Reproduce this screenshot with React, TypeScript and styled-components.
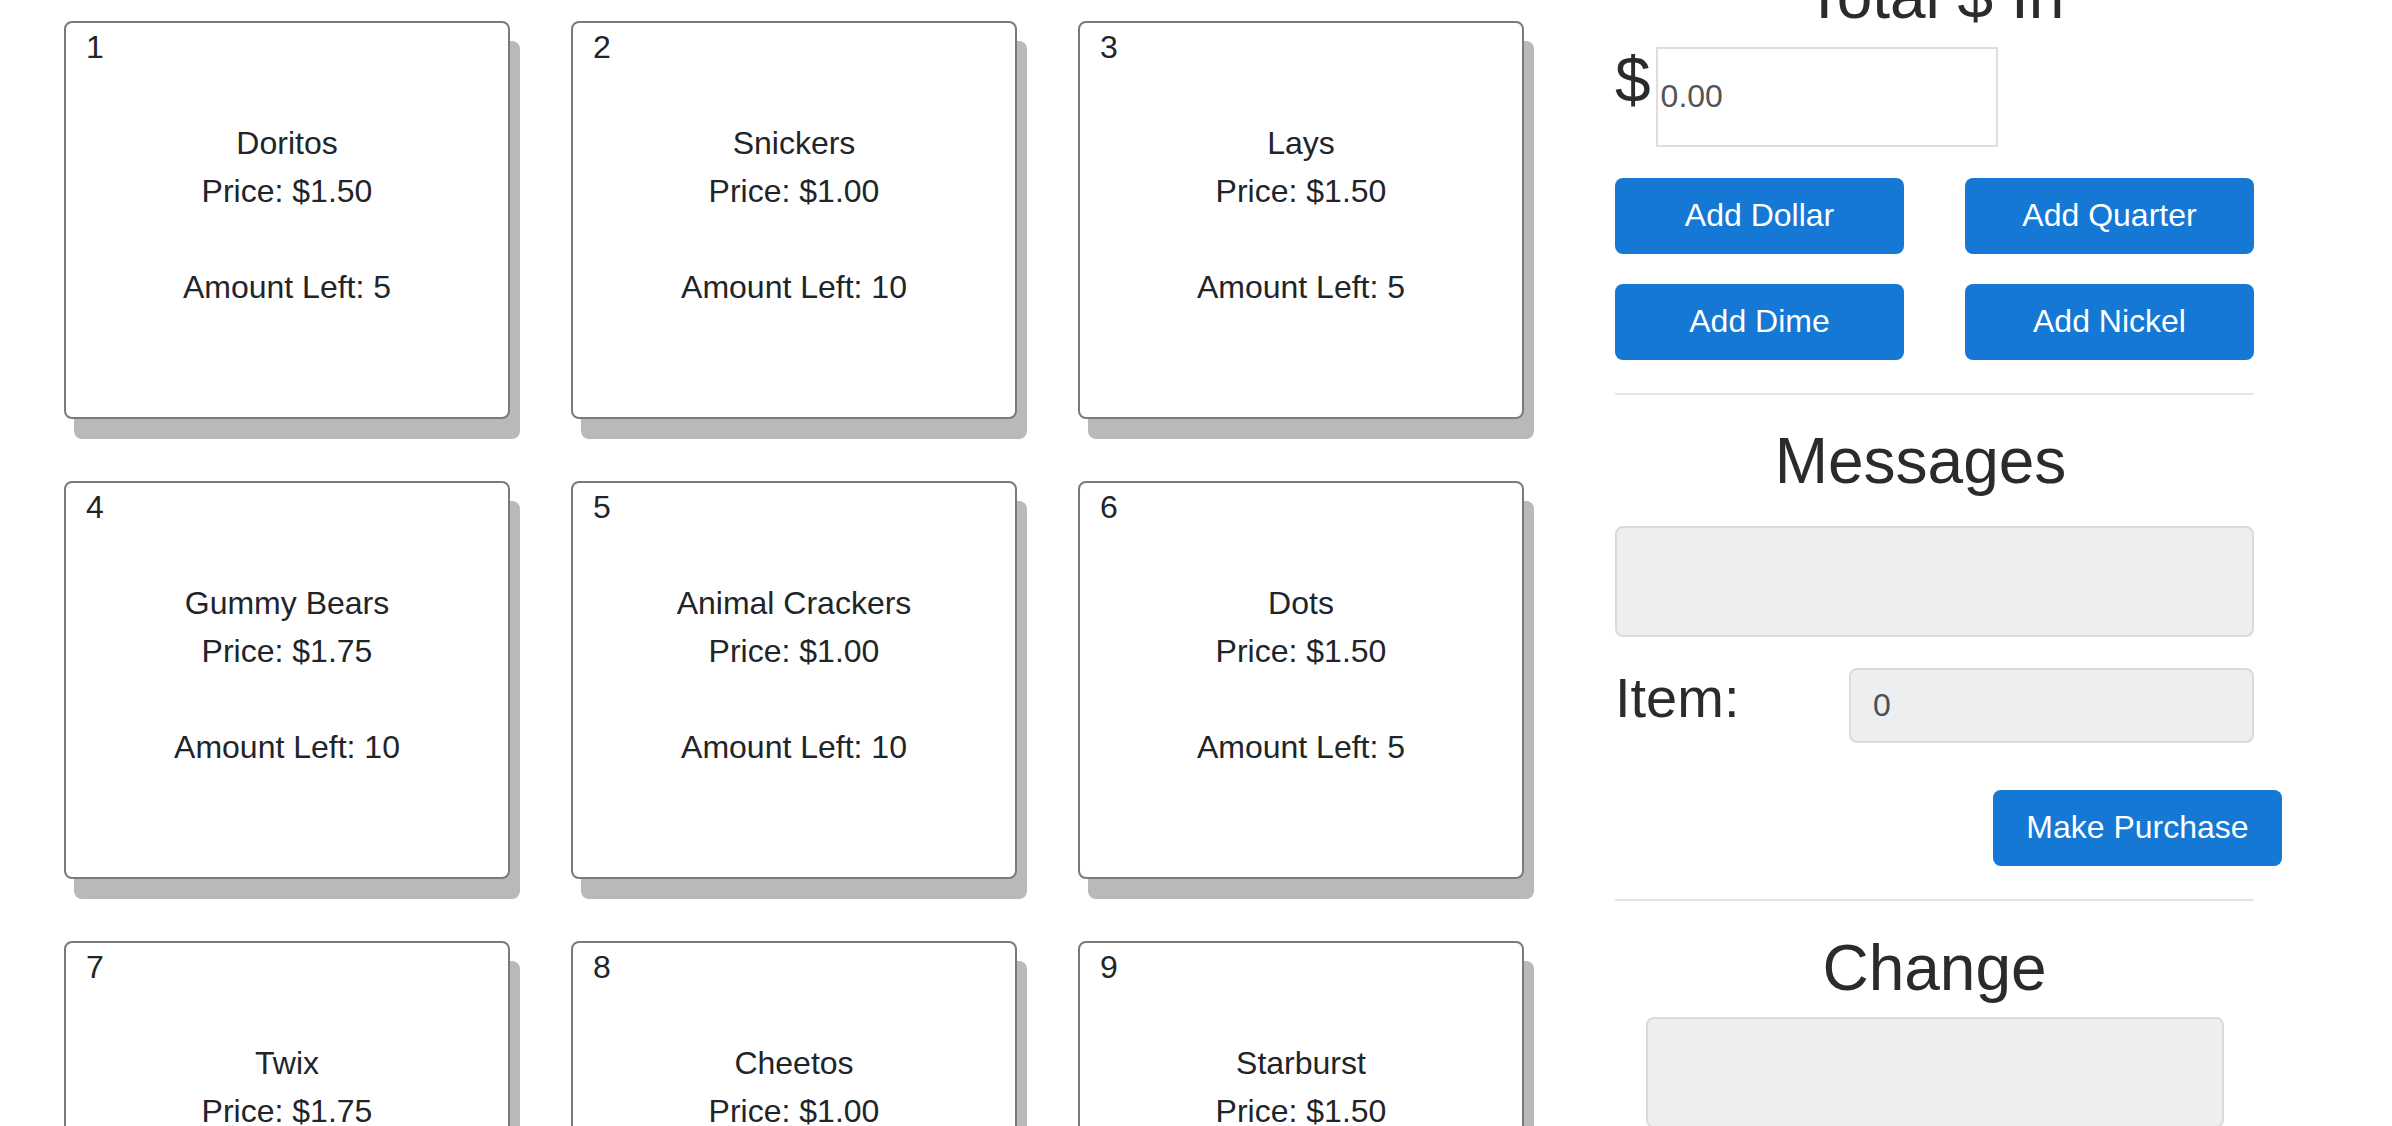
import React from "react";
import styled, { createGlobalStyle } from "styled-components";

const GlobalStyle = createGlobalStyle`
  html, body {
    margin: 0;
    padding: 0;
    background: #ffffff;
    font-family: "Liberation Sans", Arial, sans-serif;
    color: #212529;
    overflow: hidden;
  }
  * { box-sizing: border-box; }
`;

const Page = styled.div`
  display: flex;
  align-items: flex-start;
  padding: 21px 0 0 64px;
  gap: 91px;
  width: 2392px;
  height: 1126px;
`;

const Grid = styled.div`
  display: grid;
  grid-template-columns: repeat(3, 446px);
  column-gap: 61px;
  row-gap: 62px;
`;

const Card = styled.div`
  height: 398px;
  border: 2px solid #7a7a7a;
  border-radius: 8px;
  background: #ffffff;
  box-shadow: 10px 20px 0 #b9b9b9;
  padding: 0 20px;
  font-size: 32px;
  line-height: 48px;
  color: #212529;
`;

const SlotNumber = styled.div`
  text-align: left;
`;

const Line = styled.div<{ $gap?: boolean }>`
  text-align: center;
  margin-top: ${(p) => (p.$gap ? "48px" : "0")};
`;

const Side = styled.div`
  width: 639px;
  margin-top: -63px;
  display: flex;
  flex-direction: column;
  color: #292b2c;
`;

const Heading = styled.h2<{ $top?: number; $bottom?: number; $shift?: number }>`
  margin: ${(p) => p.$top ?? 0}px 0 ${(p) => p.$bottom ?? 0}px 0;
  padding-right: ${(p) => p.$shift ?? 0}px;
  font-size: 64px;
  line-height: 76.8px;
  font-weight: 400;
  text-align: center;
  color: #292b2c;
`;

const MoneyRow = styled.div`
  display: flex;
  align-items: flex-start;
  gap: 5px;
  margin-top: 12px;
`;

const Dollar = styled.span`
  font-size: 64px;
  line-height: 64px;
  margin-top: 1px;
`;

const MoneyInput = styled.input`
  width: 342px;
  height: 100px;
  border: 2px solid #dedede;
  border-radius: 0;
  padding: 0 3px;
  font-family: "Liberation Sans", Arial, sans-serif;
  font-size: 32px;
  color: #555555;
  background: #ffffff;
  outline: none;
`;

const CoinGrid = styled.div`
  display: grid;
  grid-template-columns: repeat(2, 289px);
  column-gap: 61px;
  row-gap: 30px;
  margin-top: 31px;
`;

const Button = styled.button`
  width: 289px;
  height: 76px;
  border: none;
  border-radius: 8px;
  background: #1478d4;
  color: #ffffff;
  font-family: "Liberation Sans", Arial, sans-serif;
  font-size: 32px;
  padding: 0;
  cursor: pointer;
`;

const Rule = styled.hr<{ $top: number }>`
  width: 100%;
  height: 2px;
  border: none;
  background: #e5e5e5;
  margin: ${(p) => p.$top}px 0 0 0;
`;

const ReadBox = styled.div<{ $width?: number }>`
  width: ${(p) => (p.$width ? `${p.$width}px` : "100%")};
  height: 111px;
  align-self: center;
  background: #eceef0;
  border: 2px solid #dadada;
  border-radius: 8px;
`;

const ItemRow = styled.div`
  display: grid;
  grid-template-columns: 234px 1fr;
  align-items: start;
  margin-top: 27px;
`;

const ItemLabel = styled.label`
  font-size: 56px;
  line-height: 67.2px;
  color: #292b2c;
`;

const ItemInput = styled.input`
  height: 75px;
  margin-top: 4px;
  width: 100%;
  background: #eceef0;
  border: 2px solid #dadada;
  border-radius: 8px;
  padding: 0 22px;
  font-family: "Liberation Sans", Arial, sans-serif;
  font-size: 32px;
  color: #495057;
  outline: none;
`;

const PurchaseRow = styled.div`
  display: flex;
  justify-content: flex-end;
  margin-top: 47px;
  margin-right: -28px;
`;

type Item = { id: number; name: string; price: string; qty: number };

const items: Item[] = [
  { id: 1, name: "Doritos", price: "$1.50", qty: 5 },
  { id: 2, name: "Snickers", price: "$1.00", qty: 10 },
  { id: 3, name: "Lays", price: "$1.50", qty: 5 },
  { id: 4, name: "Gummy Bears", price: "$1.75", qty: 10 },
  { id: 5, name: "Animal Crackers", price: "$1.00", qty: 10 },
  { id: 6, name: "Dots", price: "$1.50", qty: 5 },
  { id: 7, name: "Twix", price: "$1.75", qty: 10 },
  { id: 8, name: "Cheetos", price: "$1.00", qty: 10 },
  { id: 9, name: "Starburst", price: "$1.50", qty: 5 },
];

export default function App() {
  return (
    <>
      <GlobalStyle />
      <Page>
        <Grid>
          {items.map((it) => (
            <Card key={it.id}>
              <SlotNumber>{it.id}</SlotNumber>
              <Line $gap>{it.name}</Line>
              <Line>Price: {it.price}</Line>
              <Line $gap>Amount Left: {it.qty}</Line>
            </Card>
          ))}
        </Grid>
        <Side>
          <Heading>Total $ In</Heading>
          <MoneyRow>
            <Dollar>$</Dollar>
            <MoneyInput readOnly value="0.00" />
          </MoneyRow>
          <CoinGrid>
            <Button>Add Dollar</Button>
            <Button>Add Quarter</Button>
            <Button>Add Dime</Button>
            <Button>Add Nickel</Button>
          </CoinGrid>
          <Rule $top={33} />
          <Heading $top={28} $bottom={26} $shift={28}>
            Messages
          </Heading>
          <ReadBox />
          <ItemRow>
            <ItemLabel>Item:</ItemLabel>
            <ItemInput readOnly value="0" />
          </ItemRow>
          <PurchaseRow>
            <Button>Make Purchase</Button>
          </PurchaseRow>
          <Rule $top={33} />
          <Heading $top={29} $bottom={11}>
            Change
          </Heading>
          <ReadBox $width={578} />
        </Side>
      </Page>
    </>
  );
}
